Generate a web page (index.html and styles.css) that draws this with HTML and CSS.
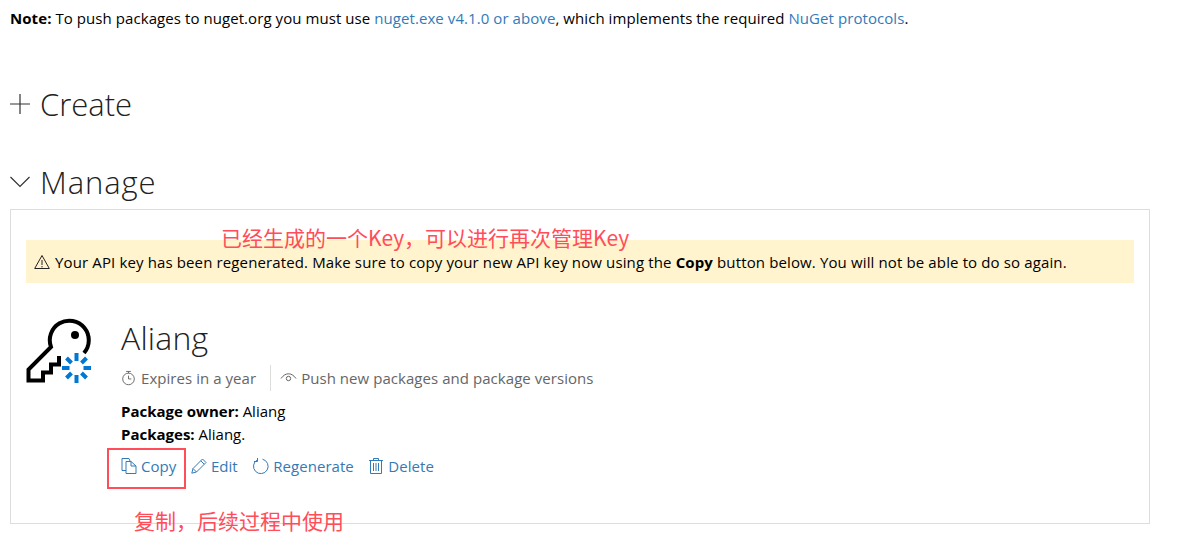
FILE: index.html
```html
<!DOCTYPE html>
<html lang="en">
<head>
<meta charset="utf-8">
<title>API keys</title>
<link rel="stylesheet" href="styles.css">
</head>
<body>
<div class="page">
  <p class="note"><b>Note:</b> To push packages to nuget.org you must use <a href="#">nuget.exe v4.1.0 or above</a>, which implements the required <a href="#">NuGet protocols</a>.</p>
  <h2 class="section create">
    <svg class="section-icon" viewBox="0 0 20 20"><path d="M10 0V20M0 10H20"/></svg>
    <span>Create</span>
  </h2>
  <h2 class="section manage">
    <svg class="section-icon" viewBox="0 0 20 20"><path d="M0.5 5L10 14.5L19.5 5"/></svg>
    <span>Manage</span>
  </h2>
  <div class="panel">
    <div class="warning">
      <svg class="warn-icon" viewBox="0 0 16 16"><path d="M8 1.500L15.300 14.500H0.700ZM8 6V11M8 12V13.400"/></svg>
      <span>Your API key has been regenerated. Make sure to copy your new API key now using the <b>Copy</b> button below. You will not be able to do so again.</span>
    </div>
    <div class="key">
      <svg class="key-icon" viewBox="0 0 66 66">
        <path class="key-body" d="M58 36A19.500 19.500 0 1 0 25 30L2.500 52.500V63.500H17V55.500H25V47.500H33V39"/>
        <circle class="key-hole" cx="49" cy="18" r="4"/>
        <path class="key-spin" d="M50.500 36V44M50.500 58V66M36 51H43.500M57.500 51H65M40.500 41L45.500 46M55.500 56L60.500 61M40.500 61L45.500 56M55.500 46L60.500 41"/>
      </svg>
      <div class="key-info">
        <h3 class="key-name">Aliang</h3>
        <div class="meta">
          <span class="meta-item">
            <svg class="meta-icon" viewBox="0 0 16 16"><circle cx="8" cy="9" r="6.200"/><path d="M5.500 1H10.500M8 1V3M8 5.500V9H11"/></svg>
            Expires in a year
          </span>
          <span class="meta-item scope">
            <svg class="meta-icon eye" viewBox="0 0 17 16"><path d="M1 8.500C3.500 5 6 3.800 8.500 3.800C11 3.800 13.500 5 16 8.500"/><circle cx="8.500" cy="8.500" r="2.200"/></svg>
            Push new packages and package versions
          </span>
        </div>
        <p class="detail"><b>Package owner:</b> Aliang</p>
        <p class="detail"><b>Packages:</b> Aliang.</p>
        <div class="actions">
          <a href="#" class="action"><svg class="act-icon" viewBox="0 0 16 16"><path d="M5 12.500H1V0.500H8L9 3M5 3.500H10L15 8V15.500H5ZM10 3.500V8H15"/></svg>Copy</a>
          <a href="#" class="action"><svg class="act-icon" viewBox="0 0 16 16"><path d="M0.800 15.200L2 10.500L11.500 1L15 4.500L5.500 14ZM2 10.500L5.500 14M9.800 2.800L13.200 6.200"/></svg>Edit</a>
          <a href="#" class="action"><svg class="act-icon wide" viewBox="0 0 17 16"><path d="M5.500 1.800A7.300 7.300 0 1 0 10.500 1.200M5.500 0V3.500H2"/></svg>Regenerate</a>
          <a href="#" class="action"><svg class="act-icon" viewBox="0 0 16 16"><path d="M1 2.500H15M5.500 2.500V0.500H10.500V2.500M2.500 2.500V15.500H13.500V2.500M5.500 5V13M8 5V13M10.500 5V13"/></svg>Delete</a>
        </div>
      </div>
    </div>
  </div>
  <div class="note-red top">已经生成的一个Key，可以进行再次管理Key</div>
  <div class="red-box"></div>
  <div class="note-red bottom">复制，后续过程中使用</div>
</div>
</body>
</html>
```
FILE: styles.css
```css
* { box-sizing: border-box; }
html, body { margin: 0; background: #fff; }
body { font-family: "Open Sans", "Noto Sans", sans-serif; font-size: 15px; color: #000; }
.page { position: relative; width: 1187px; height: 542px; overflow: hidden; padding: 8px 0 0 10px; }
a { color: #337ab7; text-decoration: none; }
b { font-weight: 700; }
.note { margin: 0; height: 21px; line-height: 21px; letter-spacing: 0.07px; }
.section { display: flex; align-items: center; margin: 0; font-weight: 300; font-size: 31px; color: #212121; height: 44px; }
.create { margin-top: 53px; }
.manage { margin-top: 34px; }
.manage span { letter-spacing: 0.9px; }
.section-icon { width: 20px; height: 20px; margin-right: 10px; flex: none; fill: none; stroke: #333; stroke-width: 1.200; }
.panel { width: 1140px; height: 315px; margin-top: 5px; border: 1px solid #ddd; padding: 30px 15px 0; }
.warning { display: flex; align-items: center; gap: 5px; height: 43px; padding-left: 8px; background: #fff4ce; letter-spacing: 0.13px; }
.warn-icon { width: 16px; height: 16px; flex: none; fill: none; stroke: #222; stroke-width: 1; }
.key { display: flex; margin-top: 34px; }
.key-icon { width: 66px; height: 66px; flex: none; fill: none; overflow: visible; }
.key-body { stroke: #000; stroke-width: 4; }
.key-hole { fill: #000; }
.key-spin { stroke: #0078d4; stroke-width: 4; }
.key-info { margin-left: 29px; }
.key-name { margin: 0; font-weight: 300; font-size: 32px; line-height: 42px; color: #212121; letter-spacing: 0.2px; }
.meta { display: flex; align-items: center; height: 26px; margin-top: 6px; color: #666; letter-spacing: 0.05px; }
.meta-item { display: flex; align-items: center; gap: 5px; }
.scope { margin-left: 14px; padding-left: 9px; border-left: 1px solid #ddd; height: 26px; gap: 4px; }
.meta-icon { width: 15px; height: 16px; fill: none; stroke: #666; stroke-width: 1; }
.eye { width: 17px; }
.detail { margin: 0; line-height: 23px; }
.detail:first-of-type { margin-top: 9px; }
.actions { display: flex; gap: 14.5px; margin-top: 10px; height: 20px; align-items: center; letter-spacing: 0.05px; }
.action { display: flex; align-items: center; gap: 4px; }
.act-icon { width: 16px; height: 16px; fill: none; stroke: #337ab7; stroke-width: 1; }
.wide { width: 17px; }
.note-red { position: absolute; color: #ff4d5a; font-family: "Noto Sans CJK SC", "Open Sans", sans-serif; font-size: 21px; line-height: 26px; white-space: nowrap; }
.top { left: 221px; top: 224px; }
.bottom { left: 134px; top: 507px; }
.red-box { position: absolute; left: 107px; top: 448px; width: 79px; height: 41px; border: 2px solid #ff4d5a; }
```
